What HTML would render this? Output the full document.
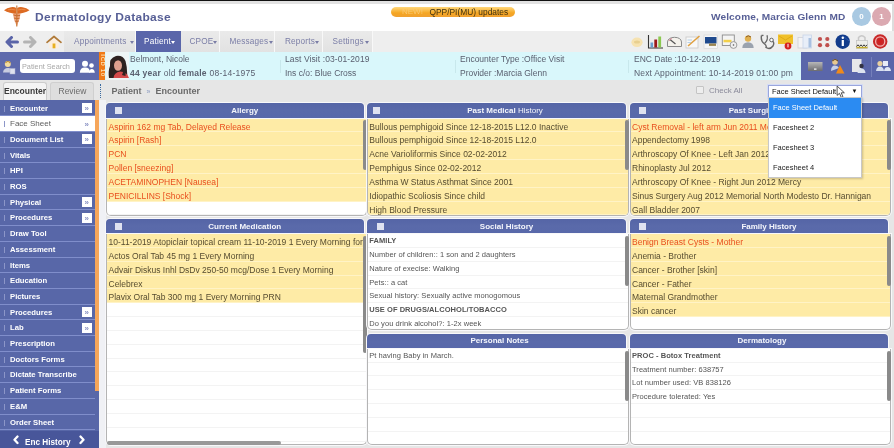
<!DOCTYPE html>
<html><head><meta charset="utf-8">
<style>
*{box-sizing:border-box;margin:0;padding:0}
html,body{width:894px;height:448px;overflow:hidden}
body{position:relative;background:#e6e6e6;font-family:"Liberation Sans",sans-serif;color:#555}
.a{position:absolute}
.nw{white-space:nowrap}
/* top */
#topline{left:0;top:0;width:894px;height:1.3px;background:#111}
#topgray{left:0;top:1.3px;width:894px;height:2.4px;background:#e2e2e2}
#header{left:0;top:3.7px;width:894px;height:27.3px;background:#fff}
#title{left:35px;top:11.5px;font-size:10px;line-height:11px;font-weight:bold;color:#575f96;letter-spacing:0.25px;transform:scaleX(1.2);transform-origin:0 0}
#pill{left:391px;top:7px;width:124px;height:10px;border-radius:5px;background:linear-gradient(#ffd77a,#f5a623 60%,#f0a030);}
#pilltxt{top:7.3px;font-size:8.4px;color:#3e3010;line-height:10px}
#welcome{left:711px;top:11.5px;font-size:9.2px;line-height:10px;font-weight:bold;color:#575f96;letter-spacing:0.1px;transform:scaleX(1.1);transform-origin:0 0}
.circ{width:19px;height:19px;border-radius:50%;top:7px;color:#fff;font-size:8px;font-weight:bold;text-align:center;line-height:19px}
/* nav */
#nav{left:0;top:31px;width:894px;height:21px;background:#eeeeee}
.menu{top:31px;height:21px;font-size:8.5px;color:#7b7ba6;line-height:21px;text-align:center;background:linear-gradient(#eaeaea,#e2e2e2);border-right:1px solid #f8f8f8}
.mt{top:36.5px;font-size:8.2px;line-height:10px;color:#7a7da6;letter-spacing:0.2px}
.ar{position:absolute;top:4px;width:0;height:0;border-left:2.5px solid transparent;border-right:2.5px solid transparent;border-top:3px solid #7a7da6}
/* patient bar */
#pbar{left:105px;top:52px;width:697px;height:28px;background:#d9f7fb}
#psearchblk{left:0;top:52px;width:99px;height:28px;background:#5e6aac}
#ostrip{left:99px;top:52px;width:6.5px;height:28px;background:#f07a18}
#pright{left:801px;top:52px;width:93px;height:28px;background:#5a66aa}
.pt{font-size:8.5px;color:#5a6070;line-height:10px}
/* row2 */
#row2{left:0;top:80px;width:894px;height:23px;background:#e6e6e6}
/* left nav */
#lnav{left:0;top:100px;width:99px;height:348px;background:#5867a8}
.li{left:0;width:95px;height:15.8px;border-bottom:1.3px solid #808ecb;color:#fff;font-weight:bold;font-size:7.7px;line-height:15px;padding-left:10px}
.li.sel{background:#fff;color:#5e5e5e;font-weight:normal;font-size:8px}
.li .dot{position:absolute;left:4px;top:5px;width:1px;height:6px;background:#8c96c8}
.li .bx{position:absolute;left:82px;top:2.5px;width:9.5px;height:10px;background:#fff;color:#8a92c4;font-size:8px;line-height:11px;text-align:center;font-weight:bold}
#othumb{left:95px;top:100px;width:4px;height:291px;background:#f6a65a}
#enchist{left:0;top:431px;width:99px;height:17px;background:#48569a;color:#fff;font-weight:bold;font-size:8.2px;line-height:17px}
/* panels */
.ph{height:16px;background:linear-gradient(#5565a6,#5a6aaa 50%,#5868aa);border-radius:4px 4px 0 0;color:#f4f6fc;font-weight:bold;font-size:8px;line-height:16px;text-align:center;padding-left:20px;box-shadow:0 0 0 1px #f8f8fa}
.ph.nc{padding-left:6px}
.ph .cb{position:absolute;left:10px;top:4.3px;width:7px;height:7px;background:#dfe2f0}
.pb{background:#fff;border:1px solid #b4b4b4;border-top:none;border-radius:0 0 5px 5px;overflow:hidden;box-shadow:0 0 0 1px #f8f8fa}
.r{height:13.85px;line-height:16.2px;font-size:8.5px;padding-left:2px;white-space:nowrap;border-bottom:1px solid #f3f3f3;letter-spacing:0}
.y{background:#feeba6;border-bottom-color:#fff3c6;color:#564c30}
.o{color:#e84f1e}
.s{font-size:7.5px;letter-spacing:0.05px;color:#555;line-height:14.4px}
.sb{position:absolute;width:4px;background:#8a8a8a;border-radius:2px}
/* dropdown */
#sel{left:768px;top:85px;width:94px;height:13px;background:#fff;border:1px solid #9aa6dc;box-shadow:0 0 0 1px #d4dcf6;font-size:7.5px;color:#111;line-height:11px;padding-left:3px}
#dd{left:768px;top:97px;width:94px;height:81px;background:#fff;border:1px solid #c8c8c8;box-shadow:1px 1px 2px rgba(0,0,0,.2)}
.opt{height:20px;line-height:20px;font-size:7.5px;color:#222;padding-left:4px}
#root{position:absolute;left:0;top:0;width:894px;height:448px;overflow:hidden;background:#e6e6e6;filter:blur(0.5px)}
</style></head><body><div id="root">
<div class="a" id="topline"></div>
<div class="a" id="topgray"></div>
<div class="a" id="header"></div>
<!-- logo caduceus -->
<svg class="a" style="left:0px;top:2px" width="34" height="28" viewBox="0 2 34 28">
<path d="M4 10.2 Q7 7.8 11 7.2 Q14.5 6.8 16.3 8 L16.3 14.5 Q13 13.2 10 12.8 Q6.5 12 4 10.2Z" fill="#dc6a22"/>
<path d="M29.5 10.2 Q26.5 7.8 22.5 7.2 Q19 6.8 17.2 8 L17.2 14.5 Q20.5 13.2 23.5 12.8 Q27 12 29.5 10.2Z" fill="#dc6a22"/>
<path d="M8 9.8 Q12 8.8 15.5 10 M25.5 9.8 Q21.5 8.8 18 10" stroke="#f09050" stroke-width="0.8" fill="none"/>
<path d="M13 13.5 L20.5 13.5 Q20 19 18 23 L16.8 26.5 L15.5 23 Q13.5 19 13 13.5Z" fill="#eaa27a"/>
<path d="M13.5 15 Q17 16.2 20 15.5 M14 18 Q17 19.2 19.5 18.2 M14.8 21 Q17 22 18.8 21" stroke="#c86a30" stroke-width="1" fill="none"/>
<rect x="16" y="5.5" width="1.5" height="21" fill="#c8702e" opacity="0.7"/>
</svg>
<div class="a nw" id="title">Dermatology Database</div>
<div class="a" id="pill"></div>
<div class="a nw" id="pilltxt" style="left:402px;color:#fbc870;font-size:8px">NEW!</div>
<div class="a nw" id="pilltxt" style="left:429.5px">QPP/PI(MU) updates</div>
<div class="a nw" id="welcome">Welcome, Marcia Glenn MD</div>
<div class="a circ" style="left:852px;background:#a9c9e2">0</div>
<div class="a circ" style="left:872px;background:#dba9b1">1</div>
<div class="a" style="left:892px;top:4px;width:2px;height:27px;background:#ddd"></div>

<!-- nav -->
<div class="a" id="nav"></div>
<svg class="a" style="left:5px;top:36px" width="14" height="12" viewBox="0 0 14 12"><path d="M6.5 1.5 L2 6 L6.5 10.5 M2.5 6 L12.5 6" stroke="#5a64a8" stroke-width="3" fill="none" stroke-linejoin="round" stroke-linecap="round"/></svg>
<svg class="a" style="left:23px;top:36px" width="14" height="12" viewBox="0 0 14 12"><path d="M7.5 1.5 L12 6 L7.5 10.5 M11.5 6 L1.5 6" stroke="#b4b4b4" stroke-width="3" fill="none" stroke-linejoin="round" stroke-linecap="round"/></svg>
<svg class="a" style="left:46px;top:35px" width="16" height="14" viewBox="0 0 16 14"><path d="M3.2 7 L3.2 13.3 L12.8 13.3 L12.8 7 L8 3Z" fill="#fdeedd"/><path d="M1 7.3 L8 1.5 L15 7.3" stroke="#b07a38" stroke-width="1.7" fill="none" stroke-linecap="round" stroke-linejoin="round"/><rect x="6.6" y="8.5" width="2.8" height="4.8" fill="#e8b020"/></svg>
<div class="a menu" style="left:64px;width:72px"></div>
<div class="a menu" style="left:136px;width:45px;background:#5a66aa;border-right:none"></div>
<div class="a menu" style="left:181px;width:39px"></div>
<div class="a menu" style="left:220px;width:55px"></div>
<div class="a menu" style="left:275px;width:48px"></div>
<div class="a menu" style="left:323px;width:50px"></div>
<div class="a mt nw" style="left:74px">Appointments<span class="ar" style="left:56px"></span></div>
<div class="a mt nw" style="left:144px;color:#fff">Patient<span class="ar" style="left:27px;border-top-color:#fff"></span></div>
<div class="a mt nw" style="left:189.5px">CPOE<span class="ar" style="left:23px"></span></div>
<div class="a mt nw" style="left:229.5px">Messages<span class="ar" style="left:39px"></span></div>
<div class="a mt nw" style="left:285px">Reports<span class="ar" style="left:30px"></span></div>
<div class="a mt nw" style="left:332.5px">Settings<span class="ar" style="left:32px"></span></div>
<svg class="a" style="left:628px;top:32px" width="266" height="19" viewBox="628 32 266 19">
<!-- 1 beige blob -->
<ellipse cx="637" cy="42.3" rx="5.6" ry="4.8" fill="#f6e2b0"/>
<ellipse cx="637" cy="42" rx="3" ry="1.5" fill="#e8cf90"/>
<!-- 2 bar chart -->
<path d="M648.5 35 L648.5 48 L663 48" stroke="#333" stroke-width="1.1" fill="none"/>
<rect x="650.5" y="42.5" width="2.6" height="5" fill="#6a9fcf"/>
<rect x="654.3" y="39.5" width="2.8" height="8" fill="#9a1a1a"/>
<rect x="658.3" y="36.5" width="2.8" height="11" fill="#8cc850"/>
<!-- 3 gauge -->
<path d="M667.5 46.5 L667.5 42 Q668 37.5 674.5 37.3 Q681 37.5 681.5 42 L681.5 46.5 Z" fill="#f4f2ec" stroke="#8a8a8a" stroke-width="1"/>
<path d="M670 39.5 L675.5 44" stroke="#555" stroke-width="1.2"/>
<path d="M669 41 Q670 38.5 672 38.6" stroke="#d88a9a" stroke-width="1" fill="none"/>
<!-- 4 notepad w pencil -->
<rect x="686" y="37" width="12" height="11" fill="#f8f8f8" stroke="#c8c8c8" stroke-width="0.8"/>
<path d="M688 46 L699.5 36" stroke="#e0a040" stroke-width="1.6"/>
<path d="M687.5 40 L692 40 M687.5 42.5 L691 42.5" stroke="#9ac0e0" stroke-width="0.7"/>
<!-- 5 blue screen -->
<rect x="704" y="35" width="13.5" height="13.5" fill="#f6f6f6" stroke="#d4d4d4" stroke-width="0.6"/>
<rect x="705" y="37" width="11.5" height="6.5" fill="#1f4a8e"/>
<rect x="709" y="43.5" width="7" height="2.4" fill="#9a8450"/>
<!-- 6 window with disc -->
<rect x="722.3" y="35" width="12" height="10.5" fill="#f4f4f4" stroke="#8c8c8c" stroke-width="0.9"/>
<rect x="723.5" y="39.8" width="8" height="2.5" fill="#f3d04a"/>
<circle cx="733.5" cy="45" r="3.4" fill="#f0f0f0" stroke="#888" stroke-width="0.8"/>
<circle cx="733.5" cy="45" r="0.8" fill="#555"/>
<!-- 7 person -->
<circle cx="748" cy="38.6" r="3.2" fill="#e0b050"/>
<path d="M746 37 Q748 34.5 751 37" stroke="#8a5a20" stroke-width="1" fill="none"/>
<path d="M742.3 48 Q742.5 42.5 748 42.3 Q753.5 42.5 753.7 48 Z" fill="#9aa2ae"/>
<!-- 8 stethoscope -->
<path d="M761.5 35.5 Q760.5 41 764 43.5 Q767 45.5 766 47.5 Q770 50 773 46 Q775 42 771.5 40.5" stroke="#666" stroke-width="1.4" fill="none"/>
<path d="M761.5 35.5 L763.5 35.3 M767 35.3 Q768.5 40 764.5 43.5" stroke="#666" stroke-width="1.3" fill="none"/>
<circle cx="771.5" cy="40" r="1.8" fill="#fff" stroke="#666" stroke-width="1"/>
<!-- 9 yellow envelope with badge -->
<rect x="778" y="34.5" width="15" height="9.5" fill="#f0c02a"/>
<path d="M779 36 L785.5 40 L792 36" stroke="#d8a010" stroke-width="0.7" fill="none"/>
<circle cx="788" cy="46" r="3.4" fill="#d42020"/>
<rect x="787.5" y="43.8" width="1" height="3.6" fill="#fff"/>
<!-- 10 copy doc -->
<rect x="798" y="37.5" width="9" height="10.5" fill="#f4f4f6" stroke="#d0d0d8" stroke-width="0.8"/>
<rect x="803" y="35" width="8.5" height="13" fill="#e8eef8" stroke="#c8d4e8" stroke-width="0.8"/>
<rect x="808.5" y="38" width="2.5" height="9.5" fill="#a8c0e0"/>
<!-- 11 red dots -->
<circle cx="820" cy="39" r="2.1" fill="#c0504d"/>
<circle cx="827.3" cy="39" r="2.1" fill="#c0504d"/>
<circle cx="820" cy="45.2" r="2.1" fill="#c0504d"/>
<circle cx="827.3" cy="45.2" r="2.1" fill="#c0504d"/>
<!-- 12 info -->
<circle cx="842.7" cy="41.7" r="7.2" fill="#123c8c"/>
<path d="M842.7 36.5 Q846 38 849 41" stroke="#3a6ac0" stroke-width="1" fill="none" opacity=".6"/>
<rect x="841.7" y="40" width="2.2" height="6" fill="#fff"/>
<circle cx="842.8" cy="37.8" r="1.2" fill="#fff"/>
<!-- 13 lock -->
<path d="M858.5 41 L858.5 37.5 Q861.7 34 865 37.5 L865 41" stroke="#c8c8c8" stroke-width="1.5" fill="none"/>
<rect x="856.3" y="40.5" width="11.2" height="8" fill="#eeeeea" stroke="#bbb" stroke-width="0.6"/>
<path d="M856.5 46.5 L858 44.8 L859.5 46.5 L861 44.8 L862.5 46.5 L864 44.8 L865.5 46.5 L867 44.8" stroke="#333" stroke-width="1" fill="none"/>
<rect x="856.5" y="46.8" width="11" height="1.5" fill="#c8b030"/>
<!-- 14 red circle -->
<circle cx="880.2" cy="41.5" r="7.2" fill="#c82828"/>
<circle cx="880.2" cy="41.5" r="4.6" fill="none" stroke="#f2b0b0" stroke-width="1.3"/>
<path d="M880.2 44 L877.8 41.4 Q877.3 39.6 878.8 39.4 Q879.8 39.4 880.2 40.4 Q880.6 39.4 881.6 39.4 Q883.1 39.6 882.6 41.4 Z" fill="#d02020"/>
</svg>


<!-- patient bar -->
<div class="a" id="psearchblk"></div>
<div class="a" style="left:20px;top:59px;width:55px;height:14px;background:#fff;border-radius:3px"></div>
<svg class="a" style="left:1px;top:58px" width="16" height="17" viewBox="0 0 16 17">
<path d="M2 14.5 Q2.5 10 7 10 Q11 10 11.5 14.5Z" fill="#c8cce0"/>
<circle cx="6.8" cy="6" r="3" fill="#f2dca0"/>
<path d="M4.5 5 Q6.8 2 9.3 5" stroke="#b88a30" stroke-width="1.2" fill="none"/>
<rect x="9" y="10.5" width="5" height="5.5" fill="#dfe2ee" stroke="#aab0d0" stroke-width="0.5"/>
</svg>
<svg class="a" style="left:79px;top:60px" width="17" height="14" viewBox="0 0 17 14">
<circle cx="6" cy="3.8" r="3" fill="#fff"/>
<path d="M0.8 12.8 Q1 7.5 6 7.5 Q11 7.5 11.2 12.8Z" fill="#fff"/>
<circle cx="12.5" cy="5.5" r="2.3" fill="#fff"/>
<path d="M10 12.8 Q10.5 9 12.7 9 Q15.5 9 15.8 12.8Z" fill="#fff"/>
</svg>

<div class="a nw" style="left:22px;top:61.5px;font-size:7.3px;color:#a8a8a8">Patient Search</div>
<div class="a" id="ostrip"></div>
<div class="a nw" style="left:90px;top:62px;width:25px;height:7px;font-size:6px;line-height:7px;color:#ffe0b0;font-weight:bold;text-align:center;transform:rotate(90deg);letter-spacing:0.6px">ICD 10</div>
<div class="a" id="pbar"></div>
<div class="a" id="pright"></div>
<svg class="a" style="left:801px;top:52px" width="93" height="28" viewBox="801 52 93 28">
<defs><linearGradient id="kb" x1="0" y1="0" x2="0" y2="1"><stop offset="0" stop-color="#b8b8b8"/><stop offset="1" stop-color="#6c6c70"/></linearGradient></defs>
<rect x="808" y="62" width="14.5" height="9" fill="url(#kb)"/>
<rect x="814" y="68.5" width="2.5" height="1.2" fill="#fff"/>
<circle cx="835" cy="62" r="2.8" fill="#e8c890"/>
<path d="M832.5 61 Q835 58 837.8 61" stroke="#6a4a20" stroke-width="1.2" fill="none"/>
<path d="M831 71 Q831 65.5 835 65.5 Q838 65.5 839 68Z" fill="#c8d0e8"/>
<path d="M836 73.5 L840 65 L844.5 73.5Z" fill="#f08a1a"/>
<rect x="852" y="59" width="9.5" height="13" fill="#e8e8ea"/>
<circle cx="861.5" cy="66" r="2.2" fill="#334"/>
<path d="M857.5 73 Q858 68.5 861.5 68.5 Q865 68.5 865.5 73Z" fill="#dde4f0"/>
<rect x="871" y="57" width="1" height="20" fill="#7580bb"/>
<circle cx="880" cy="63.5" r="2.6" fill="#e8d0a0"/>
<path d="M876 71 Q876.5 66.5 880 66.5 Q883.5 66.5 884 71Z" fill="#d8e0f0"/>
<rect x="883" y="61" width="5" height="5" fill="#e8ecf8"/>
<path d="M884 71 Q884.5 67 887.5 67 Q890.5 67 891 71Z" fill="#e0e6f4"/>
</svg>
<svg class="a" style="left:106px;top:52px" width="23" height="28" viewBox="0 0 23 28">
<rect x="0" y="0" width="23" height="28" fill="#eef5f5"/>
<path d="M3 26 Q2 19 4 14 Q3 6 10 4 Q17 3 19.5 9 Q21 15 21 19 Q22 23 20 26Z" fill="#2e2220"/>
<path d="M7.5 26 Q8 20.5 14 19.5 Q21 19.5 23 26Z" fill="#d44a4a"/>
<ellipse cx="12" cy="13.5" rx="4" ry="5.3" fill="#dfa08e"/>
<path d="M7 11.5 Q9 6.5 16 8.5 Q15 6.2 11 6.2 Q7 7 7 11.5Z" fill="#2e2220"/>
<path d="M16.5 14 Q18 19 16 23 L19.5 24 Q20.5 18 18 12Z" fill="#2e2220"/>
</svg>
<div class="a nw pt" style="left:130px;top:54px">Belmont, Nicole</div>
<div class="a nw pt" style="left:130px;top:68px;letter-spacing:0.25px"><b>44 year</b> old <b>female</b> 08-14-1975</div>
<div class="a" style="left:280px;top:60px;width:1px;height:13px;background:#c8e8ec"></div>
<div class="a nw pt" style="left:285px;top:54px;letter-spacing:0.09px">Last Visit :03-01-2019</div>
<div class="a nw pt" style="left:285px;top:68px">Ins c/o: Blue Cross</div>
<div class="a" style="left:455px;top:60px;width:1px;height:13px;background:#c8e8ec"></div>
<div class="a nw pt" style="left:460px;top:54px">Encounter Type :Office Visit</div>
<div class="a nw pt" style="left:460px;top:68px">Provider :Marcia Glenn</div>
<div class="a" style="left:628px;top:60px;width:1px;height:13px;background:#c8e8ec"></div>
<div class="a nw pt" style="left:634px;top:54px">ENC Date :10-12-2019</div>
<div class="a nw pt" style="left:634px;top:68px;letter-spacing:0.16px">Next Appointment: 10-14-2019 01:00 pm</div>

<!-- row2 -->
<div class="a" style="left:3px;top:82px;width:44px;height:18px;background:#f4f4f4;border:1px solid #ccc;border-bottom:none;border-radius:3px 3px 0 0"></div>
<div class="a nw" style="left:4px;top:86px;font-size:8.5px;font-weight:bold;color:#3a3a3a">Encounter</div>
<div class="a" style="left:50px;top:82px;width:44px;height:18px;background:#dedede;border:1px solid #cfcfcf;border-bottom:none;border-radius:3px 3px 0 0"></div>
<div class="a nw" style="left:58.5px;top:86px;font-size:8.5px;color:#6a6a6a">Review</div>
<div class="a" style="left:100px;top:84px;width:2px;height:14px;border-left:1.5px dotted #3a6aa0"></div>
<div class="a nw" style="left:111.5px;top:86px;font-size:9px;font-weight:bold;color:#6a6a6a">Patient<span style="font-weight:normal;font-size:7px;color:#8a9ac0;margin:0 5px 0 5px">»</span>Encounter</div>
<div class="a" style="left:696px;top:86px;width:8px;height:8px;border:1px solid #c4c4c4;background:#eee;border-radius:1px"></div>
<div class="a nw" style="left:709px;top:86px;font-size:8px;color:#8a8a9a">Check All</div>

<!-- left nav -->
<div class="a" style="left:99px;top:100px;width:6.5px;height:348px;background:#f0f1f5"></div>
<div class="a" id="lnav"></div>
<div class="a li nw" style="top:100.50px"><span class="dot"></span>Encounter<span class="bx">&raquo;</span></div>
<div class="a li nw sel" style="top:116.20px"><span class="dot"></span>Face Sheet<span class="bx" style="background:transparent">&raquo;</span></div>
<div class="a li nw" style="top:131.90px"><span class="dot"></span>Document List<span class="bx">&raquo;</span></div>
<div class="a li nw" style="top:147.60px"><span class="dot"></span>Vitals</div>
<div class="a li nw" style="top:163.30px"><span class="dot"></span>HPI</div>
<div class="a li nw" style="top:179.00px"><span class="dot"></span>ROS</div>
<div class="a li nw" style="top:194.70px"><span class="dot"></span>Physical<span class="bx">&raquo;</span></div>
<div class="a li nw" style="top:210.40px"><span class="dot"></span>Procedures<span class="bx">&raquo;</span></div>
<div class="a li nw" style="top:226.10px"><span class="dot"></span>Draw Tool</div>
<div class="a li nw" style="top:241.80px"><span class="dot"></span>Assessment</div>
<div class="a li nw" style="top:257.50px"><span class="dot"></span>Items</div>
<div class="a li nw" style="top:273.20px"><span class="dot"></span>Education</div>
<div class="a li nw" style="top:288.90px"><span class="dot"></span>Pictures</div>
<div class="a li nw" style="top:304.60px"><span class="dot"></span>Procedures<span class="bx">&raquo;</span></div>
<div class="a li nw" style="top:320.30px"><span class="dot"></span>Lab<span class="bx">&raquo;</span></div>
<div class="a li nw" style="top:336.00px"><span class="dot"></span>Prescription</div>
<div class="a li nw" style="top:351.70px"><span class="dot"></span>Doctors Forms</div>
<div class="a li nw" style="top:367.40px"><span class="dot"></span>Dictate Transcribe</div>
<div class="a li nw" style="top:383.10px"><span class="dot"></span>Patient Forms</div>
<div class="a li nw" style="top:398.80px"><span class="dot"></span>E&amp;M</div>
<div class="a li nw" style="top:414.50px"><span class="dot"></span>Order Sheet</div>
<div class="a" id="othumb"></div>
<div class="a nw" id="enchist"><span style="position:absolute;left:25px;top:2.5px">Enc History</span></div>
<svg class="a" style="left:12px;top:435px" width="80" height="11" viewBox="0 0 80 11"><path d="M5.5 1.5 L2.5 4.8 L5.5 8 M68.5 1.5 L71.5 4.8 L68.5 8" stroke="#fff" stroke-width="2.3" fill="none" stroke-linecap="round" stroke-linejoin="round"/></svg>

<div class="a ph nw" style="left:105.5px;top:103px;width:258.5px;height:15.5px;line-height:15.5px"><span class="cb" style="left:9.3px"></span>Allergy</div>
<div class="a pb" style="left:105.5px;top:118.5px;width:261.5px;height:97.7px"><div class="r y o" style="padding-left:2px">Aspirin 162 mg Tab, Delayed Release</div><div class="r y o" style="padding-left:2px">Aspirin [Rash]</div><div class="r y o" style="padding-left:2px">PCN</div><div class="r y o" style="padding-left:2px">Pollen [sneezing]</div><div class="r y o" style="padding-left:2px">ACETAMINOPHEN [Nausea]</div><div class="r y o" style="padding-left:2px">PENICILLINS [Shock]</div><div class="r " style="padding-left:2px">&nbsp;</div><div class="r " style="padding-left:2px">&nbsp;</div></div>
<div class="sb a" style="left:363px;top:120px;height:50px"></div>
<div class="a ph nw" style="left:105.5px;top:218.6px;width:258.5px;height:15.4px;line-height:15.4px"><span class="cb" style="left:9.3px"></span>Current Medication</div>
<div class="a pb" style="left:105.5px;top:234.0px;width:261.5px;height:211.3px"><div class="r y" style="padding-left:2px">10-11-2019 Atopiclair topical cream 11-10-2019 1 Every Morning for 30 days</div><div class="r y" style="padding-left:2px">Actos Oral Tab 45 mg 1 Every Morning</div><div class="r y" style="padding-left:2px">Advair Diskus Inhl DsDv 250-50 mcg/Dose 1 Every Morning</div><div class="r y" style="padding-left:2px">Celebrex</div><div class="r y" style="padding-left:2px">Plavix Oral Tab 300 mg 1 Every Morning PRN</div><div class="r " style="padding-left:2px">&nbsp;</div><div class="r " style="padding-left:2px">&nbsp;</div><div class="r " style="padding-left:2px">&nbsp;</div><div class="r " style="padding-left:2px">&nbsp;</div><div class="r " style="padding-left:2px">&nbsp;</div><div class="r " style="padding-left:2px">&nbsp;</div><div class="r " style="padding-left:2px">&nbsp;</div><div class="r " style="padding-left:2px">&nbsp;</div><div class="r " style="padding-left:2px">&nbsp;</div><div class="r " style="padding-left:2px">&nbsp;</div><div class="r " style="padding-left:2px">&nbsp;</div><div class="r " style="padding-left:2px">&nbsp;</div></div>
<div class="sb a" style="left:363px;top:236px;height:117px"></div>
<div class="a ph nw" style="left:367.3px;top:103px;width:258.5px;height:15.5px;line-height:15.5px"><span class="cb" style="left:5.7px"></span><span style='position:relative;left:-1.5px'>Past Medical <span style='font-weight:normal'>History</span></span></div>
<div class="a pb" style="left:367.3px;top:118.5px;width:261.5px;height:97.7px"><div class="r y" style="padding-left:1px">Bullous pemphigoid Since 12-18-2015 L12.0 Inactive</div><div class="r y" style="padding-left:1px">Bullous pemphigoid Since 12-18-2015 L12.0</div><div class="r y" style="padding-left:1px">Acne Varioliformis Since 02-02-2012</div><div class="r y" style="padding-left:1px">Pemphigus Since 02-02-2012</div><div class="r y" style="padding-left:1px">Asthma W Status Asthmat Since 2001</div><div class="r y" style="padding-left:1px">Idiopathic Scoliosis Since child</div><div class="r y" style="padding-left:1px">High Blood Pressure</div></div>
<div class="sb a" style="left:625px;top:120px;height:50px"></div>
<div class="a ph nw" style="left:367.3px;top:218.6px;width:258.5px;height:15.4px;line-height:15.4px"><span class="cb" style="left:9.8px"></span>Social History</div>
<div class="a pb" style="left:367.3px;top:234.0px;width:261.5px;height:96px"><div class="r s" style="padding-left:1px"><b>FAMILY</b></div><div class="r s" style="padding-left:1px">Number of children:: 1 son and 2 daughters</div><div class="r s" style="padding-left:1px">Nature of execise: Walking</div><div class="r s" style="padding-left:1px">Pets:: a cat</div><div class="r s" style="padding-left:1px">Sexual history: Sexually active monogomous</div><div class="r s" style="padding-left:1px"><b>USE OF DRUGS/ALCOHOL/TOBACCO</b></div><div class="r s" style="padding-left:1px">Do you drink alcohol?: 1-2x week</div></div>
<div class="sb a" style="left:625px;top:236px;height:50px"></div>
<div class="a ph nw nc" style="left:367.3px;top:334.3px;width:258.5px;height:14.5px;line-height:14.5px">Personal Notes</div>
<div class="a pb" style="left:367.3px;top:348.8px;width:261.5px;height:96.7px"><div class="r s" style="padding-left:1px">Pt having Baby in March.</div><div class="r " style="padding-left:1px">&nbsp;</div><div class="r " style="padding-left:1px">&nbsp;</div><div class="r " style="padding-left:1px">&nbsp;</div><div class="r " style="padding-left:1px">&nbsp;</div><div class="r " style="padding-left:1px">&nbsp;</div><div class="r " style="padding-left:1px">&nbsp;</div><div class="r " style="padding-left:1px">&nbsp;</div></div>
<div class="sb a" style="left:625px;top:351px;height:50px"></div>
<div class="a ph nw" style="left:630px;top:103px;width:258px;height:15.5px;line-height:15.5px"><span class="cb" style="left:9.3px"></span>Past Surgical History</div>
<div class="a pb" style="left:630px;top:118.5px;width:261px;height:97.7px"><div class="r y o" style="padding-left:1px">Cyst Removal - left arm Jun 2011 Mercy</div><div class="r y" style="padding-left:1px">Appendectomy 1998</div><div class="r y" style="padding-left:1px">Arthroscopy Of Knee - Left Jan 2012 Mercy</div><div class="r y" style="padding-left:1px">Rhinoplasty Jul 2012</div><div class="r y" style="padding-left:1px">Arthroscopy Of Knee - Right Jun 2012 Mercy</div><div class="r y" style="padding-left:1px">Sinus Surgery Aug 2012 Memorial North Modesto Dr. Hannigan</div><div class="r y" style="padding-left:1px">Gall Bladder 2007</div></div>
<div class="sb a" style="left:886.5px;top:120px;height:50px"></div>
<div class="a ph nw" style="left:630px;top:218.6px;width:258px;height:15.4px;line-height:15.4px"><span class="cb" style="left:9.3px"></span>Family History</div>
<div class="a pb" style="left:630px;top:234.0px;width:261px;height:96px"><div class="r y o" style="padding-left:1px">Benign Breast Cysts - Mother</div><div class="r y" style="padding-left:1px">Anemia - Brother</div><div class="r y" style="padding-left:1px">Cancer - Brother [skin]</div><div class="r y" style="padding-left:1px">Cancer - Father</div><div class="r y" style="padding-left:1px">Maternal Grandmother</div><div class="r y" style="padding-left:1px">Skin cancer</div><div class="r " style="padding-left:1px">&nbsp;</div><div class="r " style="padding-left:1px">&nbsp;</div></div>
<div class="sb a" style="left:886.5px;top:236px;height:50px"></div>
<div class="a ph nw nc" style="left:630px;top:334.3px;width:258px;height:14.5px;line-height:14.5px">Dermatology</div>
<div class="a pb" style="left:630px;top:348.8px;width:261px;height:96.7px"><div class="r s" style="padding-left:1px"><b>PROC - Botox Treatment</b></div><div class="r s" style="padding-left:1px">Treatment number: 638757</div><div class="r s" style="padding-left:1px">Lot number used: VB 838126</div><div class="r s" style="padding-left:1px">Procedure tolerated: Yes</div><div class="r " style="padding-left:1px">&nbsp;</div><div class="r " style="padding-left:1px">&nbsp;</div><div class="r " style="padding-left:1px">&nbsp;</div><div class="r " style="padding-left:1px">&nbsp;</div></div>
<div class="sb a" style="left:886.5px;top:351px;height:50px"></div>
<div class="a" style="left:107px;top:441px;width:174px;height:3.5px;background:#999;border-radius:2px"></div>

<!-- dropdown -->
<div class="a nw" id="sel">Face Sheet Default<span style="position:absolute;right:3.5px;font-size:6px">&#9660;</span></div>
<svg class="a" style="left:835.5px;top:84.5px" width="10.5" height="13.5" viewBox="0 0 10 13"><path d="M1 1 L1 10 L3.3 8 L5 12 L6.6 11.3 L5 7.5 L8 7.5Z" fill="#fff" stroke="#333" stroke-width="0.8" stroke-linejoin="round"/></svg>
<div class="a" id="dd">
<div class="opt" style="background:#2b8bf2;color:#fff">Face Sheet Default</div>
<div class="opt">Facesheet 2</div>
<div class="opt">Facesheet 3</div>
<div class="opt">Facesheet 4</div>
</div>
</div></body></html>
